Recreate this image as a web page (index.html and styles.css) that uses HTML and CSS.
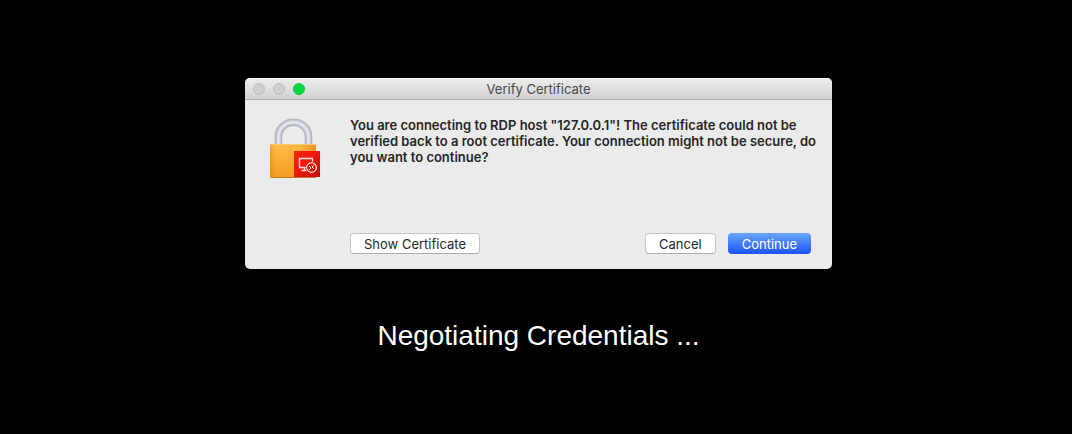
FILE: index.html
```html
<!DOCTYPE html>
<html lang="en">
<head>
<meta charset="utf-8">
<title>Verify Certificate</title>
<link rel="stylesheet" href="styles.css">
</head>
<body class="screen">
<section class="dialog" role="dialog" aria-labelledby="dialog-title">
  <header class="titlebar">
    <div class="lights">
      <button class="light" type="button" aria-label="Close"></button>
      <button class="light" type="button" aria-label="Minimize"></button>
      <button class="light light-zoom" type="button" aria-label="Zoom"></button>
    </div>
    <h1 class="title" id="dialog-title">Verify Certificate</h1>
  </header>
  <div class="content">
    <svg class="lock" viewBox="0 0 54 64" aria-hidden="true">
      <defs>
        <linearGradient id="brass" x1="0" x2="1" y1="0" y2="0">
          <stop offset="0" stop-color="#ef9a20"/><stop offset=".12" stop-color="#fcb23c"/><stop offset=".65" stop-color="#fcb038"/><stop offset="1" stop-color="#ec8c12"/>
        </linearGradient>
        <linearGradient id="shade" x1="0" x2="0" y1="0" y2="1">
          <stop offset="0" stop-color="#fff" stop-opacity=".1"/><stop offset=".5" stop-color="#f08000" stop-opacity=".1"/><stop offset="1" stop-color="#e07800" stop-opacity=".4"/>
        </linearGradient>
        <linearGradient id="badge" x1="0" x2="1" y1="0" y2="1">
          <stop offset="0" stop-color="#ff2410"/><stop offset=".5" stop-color="#f01808"/><stop offset="1" stop-color="#cf0904"/>
        </linearGradient>
      </defs>
      <g fill="none">
        <path d="M8.500 28V19.500A14.800 14 0 0 1 38.500 19.500V28" stroke="#abafb9" stroke-width="7.500"/>
        <path d="M8.500 28V19.500A14.800 14 0 0 1 38.500 19.500V28" stroke="#c6c9d1" stroke-width="5.500"/>
        <path d="M8.500 28V19.500A14.800 14 0 0 1 38.500 19.500V28" stroke="#e4e6ec" stroke-width="2.500"/>
      </g>
      <rect x="0" y="27" width="46" height="34" rx="1" fill="url(#brass)"/>
      <rect x="0" y="27" width="46" height="34" rx="1" fill="url(#shade)"/>
      <path d="M1 27.500H45" stroke="#ffcb6a"/>
      <path d="M1 60.500H45" stroke="#c97b18"/>
      <rect x="24" y="34" width="26" height="26" fill="url(#badge)"/>
      <path d="M24 60L50 34V60Z" fill="#b80000" opacity=".15"/>
      <path d="M35.500 50.500H29.500V41.500H42.500V44.500M34.500 50.500V53M31.500 53.500H36.500" fill="none" stroke="#ffe6e0" stroke-width="1.300"/>
      <circle cx="41.500" cy="50.500" r="4.900" fill="#e81408" stroke="#ffe6e0" stroke-width="1.100"/>
      <path d="M39 49L41 51L39 53M44 48L42 50L44 52" fill="none" stroke="#ffe6e0" stroke-width="1"/>
    </svg>
    <div class="main">
      <p class="message">You are connecting to RDP host "127.0.0.1"! The certificate could not be verified back to a root certificate. Your connection might not be secure, do you want to continue?</p>
      <div class="actions">
        <button class="btn btn-show" type="button">Show Certificate</button>
        <button class="btn" type="button">Cancel</button>
        <button class="btn btn-primary" type="button">Continue</button>
      </div>
    </div>
  </div>
</section>
<p class="status" role="status">Negotiating Credentials ...</p>
</body>
</html>
```
FILE: styles.css
```css
* { box-sizing: border-box; }

.screen {
  margin: 0;
  min-height: 100vh;
  padding: 78px 0 0 5px;
  background: #000;
  display: flex;
  flex-direction: column;
  align-items: center;
  font-family: Inter, "Liberation Sans", sans-serif;
}

.dialog {
  width: 100%;
  max-width: 587px;
  background: #ebebeb;
  border-radius: 5px;
  overflow: hidden;
}

.titlebar {
  display: grid;
  grid-template-columns: 1fr auto 1fr;
  align-items: center;
  height: 22px;
  padding: 0 8px;
  background: linear-gradient(#ececec, #d2d2d2);
  border-top: 1px solid #f6f6f6;
  border-bottom: 1px solid #adadad;
}

.lights { display: flex; gap: 8px; }

.light {
  width: 12px;
  height: 12px;
  padding: 0;
  border: 1px solid #bcbcbc;
  border-radius: 50%;
  background: #d0d0d0;
}

.light-zoom { background: #00db41; border-color: #12c33f; }

.title {
  margin: 0;
  font-size: 13px;
  line-height: 20px;
  font-weight: 400;
  color: #494949;
}

.content {
  display: flex;
  align-items: flex-start;
  gap: 26px;
  padding: 17px 9px 15px 25px;
}

.lock { flex: none; width: 54px; height: 64px; }

.main {
  flex: 1;
  min-height: 137px;
  display: flex;
  flex-direction: column;
  justify-content: space-between;
}

.message {
  margin: 0;
  font-size: 13px;
  line-height: 16px;
  font-weight: 600;
  color: #262626;
}

.actions {
  display: flex;
  gap: 12px;
  padding-right: 12px;
}

.btn {
  height: 21px;
  padding: 0 13px;
  border: 1px solid #c6c6c6;
  border-bottom-color: #adadad;
  border-radius: 4px;
  background: #fff;
  color: #262626;
  font-family: inherit;
  font-size: 13px;
  line-height: 18px;
}

.btn-show { margin-right: auto; }

.btn-primary {
  padding: 0 14px;
  border: 0;
  background: linear-gradient(#6aa4fd, #1b53fb);
  color: #fff;
}

.status {
  margin: 50px 0 0;
  font-family: "Liberation Sans", Arial, sans-serif;
  font-size: 28px;
  line-height: 34px;
  color: #fff;
}
```
